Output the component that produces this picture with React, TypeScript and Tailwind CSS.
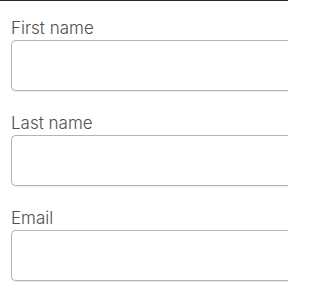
export default function App() {
  const fields = ['First name', 'Last name', 'Email'];

  return (
    <div className="h-[288px] w-[288px] overflow-hidden bg-white border-t border-[#2a2a2a] font-['Inter',sans-serif]">
      <form className="flex flex-col gap-5 pl-[11px] pt-[15px]">
        {fields.map((label) => (
          <label key={label} className="flex flex-col">
            <span className="text-[17px] font-light leading-6 text-[#505050]">{label}</span>
            {/* field runs past the right edge of the frame */}
            <input
              type="text"
              className="h-[51px] w-full rounded-l-[5px] border border-r-0 border-[#b3b3b3] bg-white shadow-[0_1px_1px_rgba(0,0,0,0.08)] outline-none"
            />
          </label>
        ))}
      </form>
    </div>
  );
}
